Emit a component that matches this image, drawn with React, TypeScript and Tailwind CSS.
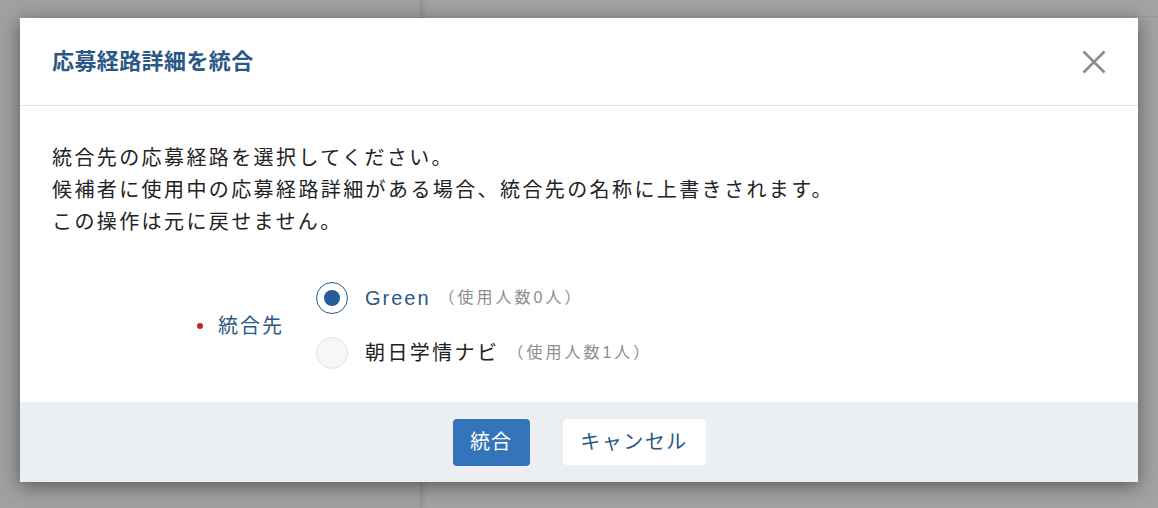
import React from 'react';

const font = { fontFamily: '"Liberation Sans", "Noto Sans CJK JP", sans-serif' };

export default function App() {
  const options = [
    { id: 'green', label: 'Green', count: 0, checked: true },
    { id: 'asahi', label: '朝日学情ナビ', count: 1, checked: false },
  ];

  return (
    <div className="relative w-full h-[508px] overflow-hidden bg-[#a2a2a2]" style={font}>
      {/* page behind the overlay */}
      <div className="absolute inset-0 flex">
        <div className="w-[420px] h-full bg-[#a0a0a0] shadow-[2px_0_6px_rgba(0,0,0,0.15)]" />
        <div className="flex-1 h-[17px] border-b border-[#999]" />
      </div>

      <div className="relative px-[20px] pt-[18px]">
        <div className="bg-white shadow-[0_4px_18px_rgba(0,0,0,0.45)]">
          <div className="h-[88px] flex items-center justify-between pl-[32px] pr-[30px] border-b border-[#e2e2e2]">
            <h1 className="text-[22px] font-bold text-[#2a5885] tracking-[0.4px]">応募経路詳細を統合</h1>
            <button className="w-[28px] h-[28px] flex items-center justify-center text-[#8c8c8c]">
              <svg width="24" height="24" viewBox="0 0 24 24" fill="none" stroke="currentColor" strokeWidth="2.6">
                <path d="M1.5 1.5 L22.5 22.5 M22.5 1.5 L1.5 22.5" />
              </svg>
            </button>
          </div>

          <div className="pt-[36px] pb-[33px] px-[32px]">
            <div className="text-[20px] leading-[32px] tracking-[2.4px] text-[#222]">
              <p>統合先の応募経路を選択してください。</p>
              <p>候補者に使用中の応募経路詳細がある場合、統合先の名称に上書きされます。</p>
              <p>この操作は元に戻せません。</p>
            </div>

            <div className="mt-[44px] flex items-center pl-[145px]">
              <div className="flex items-center gap-[15px] w-[119px]">
                <span className="w-[6px] h-[6px] rounded-full bg-[#c0282a]" />
                <span className="text-[20px] tracking-[2px] text-[#2a5885]">統合先</span>
              </div>
              <div className="flex flex-col gap-[23px]">
                {options.map(o => (
                  <label key={o.id} className="flex items-center">
                    {o.checked ? (
                      <span className="w-[32px] h-[32px] rounded-full border border-[#2a5c94] bg-white flex items-center justify-center">
                        <span className="w-[16px] h-[16px] rounded-full bg-[#265c97]" />
                      </span>
                    ) : (
                      <span className="w-[32px] h-[32px] rounded-full border border-[#e3e3e3] bg-[#f7f7f7]" />
                    )}
                    <span className={`ml-[17px] text-[20px] ${o.checked ? 'tracking-[2px] text-[#2a5885]' : 'tracking-[2.4px] text-[#222]'}`}>
                      {o.label}
                    </span>
                    <span className="ml-[8px] text-[16px] tracking-[3px] text-[#8e8e8e]">（使用人数{o.count}人）</span>
                  </label>
                ))}
              </div>
            </div>
          </div>

          <div className="h-[80px] bg-[#ebeff2] flex items-center justify-center gap-[33px]">
            <button className="w-[77px] h-[47px] rounded-[4px] bg-[#3474b9] text-white text-[20px] tracking-[1px]">統合</button>
            <button className="w-[143px] h-[46px] rounded-[4px] bg-white text-[#2a5885] text-[20px] tracking-[1.5px]">キャンセル</button>
          </div>
        </div>
      </div>
    </div>
  );
}
